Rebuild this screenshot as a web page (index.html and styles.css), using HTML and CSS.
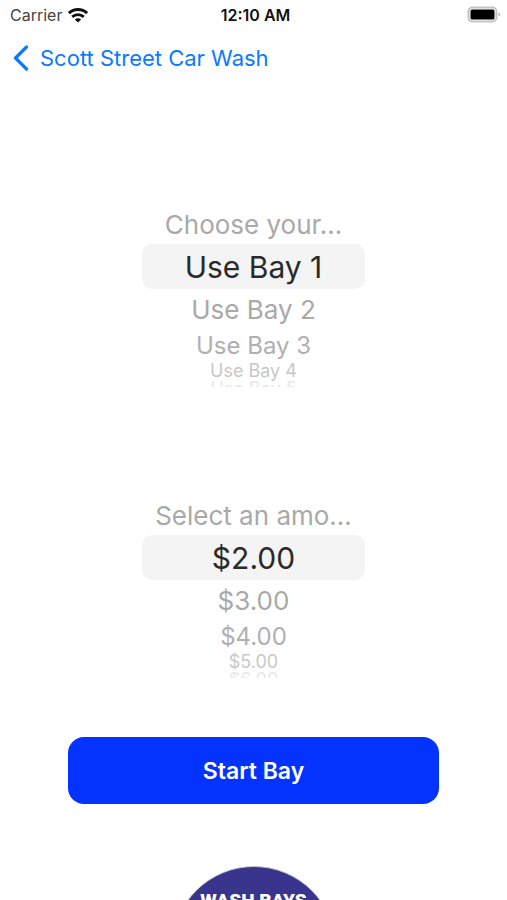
FILE: index.html
```
<!DOCTYPE html>
<html lang="en">
<head>
<meta charset="utf-8">
<meta name="viewport" content="width=device-width, initial-scale=1">
<title>Scott Street Car Wash</title>
<link rel="stylesheet" href="styles.css">
</head>
<body>
<div class="screen">
  <header class="status">
    <div class="carrier">
      <span>Carrier</span>
      <svg class="wifi" viewBox="0 0 20 15" aria-hidden="true">
        <path d="M1 5.200C6 .4 14 .4 19 5.200" fill="none" stroke="#111" stroke-width="3"/>
        <path d="M4.200 8.900C7.500 5.900 12.500 5.900 15.800 8.900" fill="none" stroke="#111" stroke-width="2.800"/>
        <path d="M10 14.500L6.800 11.500C8.600 9.900 11.400 9.900 13.200 11.500Z" fill="#111"/>
      </svg>
    </div>
    <time class="clock">12:10 AM</time>
    <svg class="battery" viewBox="0 0 34 18" role="img" aria-label="Battery full">
      <rect x="1.500" y="1.500" width="28" height="14" rx="4" fill="#fff" stroke="#c4c4c4" stroke-width="2"/>
      <rect x="3.500" y="3.500" width="24" height="10" rx="1.500" fill="#000"/>
      <path d="M31.500 6.500C33.500 7 33.500 10 31.500 10.500Z" fill="#b5b5b5"/>
    </svg>
  </header>

  <nav class="nav">
    <a class="back" href="#">
      <svg class="chevron" viewBox="0 0 16 26" aria-hidden="true">
        <path d="M13.500 2L2.500 13L13.500 24" fill="none" stroke="#0a7aff" stroke-width="3.200" stroke-linecap="round" stroke-linejoin="round"/>
      </svg>
      <span>Scott Street Car Wash</span>
    </a>
  </nav>

  <main class="content">
    <div class="wheel" role="radiogroup" aria-label="Bay">
      <label class="row near"><input type="radio" name="bay"><span>Choose your…</span></label>
      <label class="row selected"><input type="radio" name="bay" checked><span>Use Bay 1</span></label>
      <label class="row near"><input type="radio" name="bay"><span>Use Bay 2</span></label>
      <label class="row mid"><input type="radio" name="bay"><span>Use Bay 3</span></label>
      <label class="row far"><input type="radio" name="bay"><span>Use Bay 4</span></label>
      <label class="row edge"><input type="radio" name="bay"><span>Use Bay 5</span></label>
    </div>

    <div class="wheel" role="radiogroup" aria-label="Amount">
      <label class="row near"><input type="radio" name="amount"><span>Select an amo…</span></label>
      <label class="row selected"><input type="radio" name="amount" checked><span>$2.00</span></label>
      <label class="row near"><input type="radio" name="amount"><span>$3.00</span></label>
      <label class="row mid"><input type="radio" name="amount"><span>$4.00</span></label>
      <label class="row far"><input type="radio" name="amount"><span>$5.00</span></label>
      <label class="row edge"><input type="radio" name="amount"><span>$6.00</span></label>
    </div>

    <button class="start" type="button">Start Bay</button>

    <div class="logo">WASH BAYS</div>
  </main>
</div>
</body>
</html>
```
FILE: styles.css
```
* {
  box-sizing: border-box;
}

body {
  margin: 0;
  background: #fff;
  color: #222;
  font-family: Inter, "Liberation Sans", sans-serif;
}

.screen {
  height: 100vh;
  overflow: hidden;
}

.status {
  display: grid;
  grid-template-columns: 1fr auto 1fr;
  align-items: center;
  height: 30px;
  padding: 0 6px 0 10px;
  font-size: 16px;
}

.carrier {
  display: flex;
  align-items: center;
  gap: 6px;
  color: #444;
}

.wifi {
  width: 20px;
  height: 15px;
}

.clock {
  color: #111;
  font-weight: 600;
}

.battery {
  justify-self: end;
  width: 34px;
  height: 18px;
}

.nav {
  display: flex;
  align-items: center;
  height: 56px;
  padding: 0 13px;
}

.back {
  display: flex;
  align-items: center;
  gap: 11px;
  color: #0a7aff;
  font-size: 22px;
  text-decoration: none;
}

.chevron {
  width: 16px;
  height: 26px;
}

.content {
  display: flex;
  flex-direction: column;
  align-items: center;
  padding-top: 118px;
}

.wheel {
  display: flex;
  flex-direction: column;
  width: 44%;
  margin-bottom: 108px;
}

.wheel + .wheel {
  margin-bottom: 59px;
}

.row {
  display: flex;
  justify-content: center;
  align-items: center;
  white-space: nowrap;
}

.row input {
  appearance: none;
  width: 0;
  height: 0;
  margin: 0;
}

.selected {
  height: 45px;
  border-radius: 10px;
  background: #f4f4f4;
  color: #2a2a2a;
  font-size: 30px;
}

.near {
  height: 40px;
  color: #a9a9a9;
  font-size: 26px;
}

.mid {
  height: 32px;
  color: #b0b0b0;
  font-size: 24px;
}

.far {
  height: 20px;
  color: #c8c8c8;
  font-size: 18px;
  line-height: 20px;
}

.edge {
  align-items: flex-start;
  height: 6px;
  overflow: hidden;
  color: #e8e8e8;
  font-size: 18px;
  line-height: 16px;
}

.start {
  width: 73%;
  height: 67px;
  margin-bottom: 62px;
  border: 0;
  border-radius: 16px;
  background: #0433ff;
  color: #fff;
  font: 600 23px Inter, "Liberation Sans", sans-serif;
}

.logo {
  flex: none;
  width: 164px;
  height: 164px;
  padding-top: 22px;
  border: 1px solid #c4c4c8;
  border-radius: 50%;
  background: #39358c;
  color: #fff;
  font: 900 19px/24px Roboto, "Liberation Sans", sans-serif;
  text-align: center;
}
```
